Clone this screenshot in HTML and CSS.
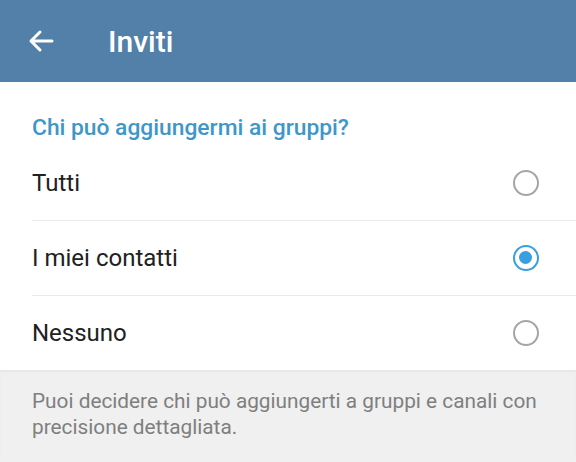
FILE: index.html
```html
<!DOCTYPE html>
<html lang="it">
<head>
    <meta charset="UTF-8">
    <meta name="viewport" content="width=device-width, initial-scale=1.0">
    <title>Inviti</title>
    <link rel="stylesheet" href="styles.css">
</head>
<body>

<div class="header">
    <svg class="back" width="26" height="24" viewBox="0 0 26 24">
        <path d="M24 12H3M12 3L3 12l9 9" fill="none" stroke="#fff" stroke-width="3" stroke-linecap="round" stroke-linejoin="round"/>
    </svg>
    <h1>Inviti</h1>
</div>

<div class="section">
    <div class="section-title">Chi può aggiungermi ai gruppi?</div>
    <div class="row">
        <span>Tutti</span>
        <span class="radio"></span>
    </div>
    <div class="row">
        <span>I miei contatti</span>
        <span class="radio checked"></span>
    </div>
    <div class="row">
        <span>Nessuno</span>
        <span class="radio"></span>
    </div>
</div>

<div class="info">
    Puoi decidere chi può aggiungerti a gruppi e canali con precisione dettagliata.
</div>

</body>
</html>
```

FILE: styles.css
```css
body {
    font-family: Roboto, "Noto Sans", sans-serif;
    margin: 0;
    background: #f0f0f0;
    width: 576px;
    height: 462px;
    overflow: hidden;
}
.header {
    height: 82px;
    background: #5280a8;
    display: flex;
    align-items: center;
    padding-left: 28px;
}
.back {
    display: block;
}
.header h1 {
    margin: 0 0 0 54px;
    color: #fff;
    font-size: 30px;
    font-weight: 500;
}
.section {
    background: #fff;
}
.section-title {
    color: #3e96c9;
    font-size: 22.8px;
    font-weight: 500;
    line-height: 30px;
    padding: 31px 32px 3px;
}
.row {
    display: flex;
    align-items: center;
    justify-content: space-between;
    height: 75px;
    margin-left: 32px;
    padding-right: 37px;
    border-bottom: 1px solid #ebebeb;
    box-sizing: border-box;
    font-size: 24px;
    color: #212121;
}
.row:last-child {
    border-bottom: none;
    height: 74px;
}
.radio {
    width: 26px;
    height: 26px;
    border: 2.5px solid #a5a5a5;
    border-radius: 50%;
    box-sizing: border-box;
    position: relative;
}
.radio.checked {
    border-color: #3a9fe0;
}
.radio.checked::after {
    content: "";
    position: absolute;
    left: 4px;
    top: 4px;
    width: 13px;
    height: 13px;
    border-radius: 50%;
    background: #3a9fe0;
}
.info {
    box-shadow: inset 0 2px 2px rgba(0,0,0,0.04);
    padding: 18px 32px;
    font-size: 20.8px;
    line-height: 26px;
    color: #7f7f7f;
}
```
